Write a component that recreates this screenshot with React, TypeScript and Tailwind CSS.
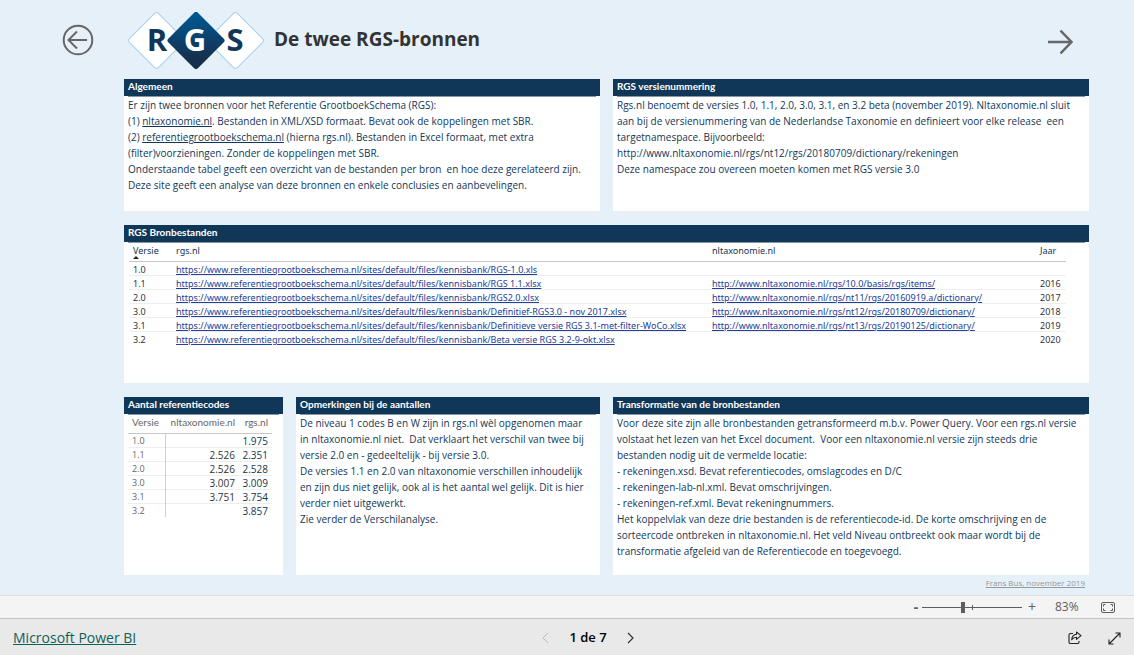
import React, { useState } from "react";

// ─── Data ──────────────────────────────────────────────────────────────────────

const BASE = "https://www.referentiegrootboekschema.nl/sites/default/files/kennisbank/";
const NT = "http://www.nltaxonomie.nl/rgs/";

interface Bron {
  versie: string;
  rgs: string;
  nt?: string;
  jaar?: string;
}

const bronnen: Bron[] = [
  { versie: "1.0", rgs: `${BASE}RGS-1.0.xls` },
  { versie: "1.1", rgs: `${BASE}RGS 1.1.xlsx`, nt: `${NT}10.0/basis/rgs/items/`, jaar: "2016" },
  { versie: "2.0", rgs: `${BASE}RGS2.0.xlsx`, nt: `${NT}nt11/rgs/20160919.a/dictionary/`, jaar: "2017" },
  { versie: "3.0", rgs: `${BASE}Definitief-RGS3.0 - nov 2017.xlsx`, nt: `${NT}nt12/rgs/20180709/dictionary/`, jaar: "2018" },
  { versie: "3.1", rgs: `${BASE}Definitieve versie RGS 3.1-met-filter-WoCo.xlsx`, nt: `${NT}nt13/rgs/20190125/dictionary/`, jaar: "2019" },
  { versie: "3.2", rgs: `${BASE}Beta versie RGS 3.2-9-okt.xlsx`, jaar: "2020" },
];

const aantallen: [string, string, string][] = [
  ["1.0", "", "1.975"],
  ["1.1", "2.526", "2.351"],
  ["2.0", "2.526", "2.528"],
  ["3.0", "3.007", "3.009"],
  ["3.1", "3.751", "3.754"],
  ["3.2", "", "3.857"],
];

const algemeen: React.ReactNode[] = [
  "Er zijn twee bronnen voor het Referentie GrootboekSchema (RGS):",
  <>(1) <a href="http://www.nltaxonomie.nl" className="underline">nltaxonomie.nl</a>. Bestanden in XML/XSD formaat. Bevat ook de koppelingen met SBR.</>,
  <>(2) <a href="https://www.referentiegrootboekschema.nl" className="underline">referentiegrootboekschema.nl</a> (hierna rgs.nl). Bestanden in Excel formaat, met extra</>,
  "(filter)voorzieningen. Zonder de koppelingen met SBR.",
  "Onderstaande tabel geeft een overzicht van de bestanden per bron  en hoe deze gerelateerd zijn.",
  "Deze site geeft een analyse van deze bronnen en enkele conclusies en aanbevelingen.",
];

const versienummering: React.ReactNode[] = [
  "Rgs.nl benoemt de versies 1.0, 1.1, 2.0, 3.0, 3.1, en 3.2 beta (november 2019). Nltaxonomie.nl sluit",
  "aan bij de versienummering van de Nederlandse Taxonomie en definieert voor elke release  een",
  "targetnamespace. Bijvoorbeeld:",
  "http://www.nltaxonomie.nl/rgs/nt12/rgs/20180709/dictionary/rekeningen",
  "Deze namespace zou overeen moeten komen met RGS versie 3.0",
];

const opmerkingen: React.ReactNode[] = [
  "De niveau 1 codes B en W zijn in rgs.nl wèl opgenomen maar",
  "in nltaxonomie.nl niet.  Dat verklaart het verschil van twee bij",
  "versie 2.0 en - gedeeltelijk - bij versie 3.0.",
  "De versies 1.1 en 2.0 van nltaxonomie verschillen inhoudelijk",
  "en zijn dus niet gelijk, ook al is het aantal wel gelijk. Dit is hier",
  "verder niet uitgewerkt.",
  "Zie verder de Verschilanalyse.",
];

const transformatie: React.ReactNode[] = [
  "Voor deze site zijn alle bronbestanden getransformeerd m.b.v. Power Query. Voor een rgs.nl versie",
  "volstaat het lezen van het Excel document.  Voor een nltaxonomie.nl versie zijn steeds drie",
  "bestanden nodig uit de vermelde locatie:",
  "- rekeningen.xsd. Bevat referentiecodes, omslagcodes en D/C",
  "- rekeningen-lab-nl.xml. Bevat omschrijvingen.",
  "- rekeningen-ref.xml. Bevat rekeningnummers.",
  "Het koppelvlak van deze drie bestanden is de referentiecode-id. De korte omschrijving en de",
  "sorteercode ontbreken in nltaxonomie.nl. Het veld Niveau ontbreekt ook maar wordt bij de",
  "transformatie afgeleid van de Referentiecode en toegevoegd.",
];

// ─── Building blocks ───────────────────────────────────────────────────────────

const Card: React.FC<{ title: string; className: string; children: React.ReactNode }> = ({ title, className, children }) => (
  <section className={`bg-white min-w-0 ${className}`}>
    <div className="bg-[#113758]">
      <h2 className="px-1 font-['Lato','Open_Sans',sans-serif] text-[10px] leading-[15px] pb-[2px] font-bold text-white whitespace-nowrap">{title}</h2>
    </div>
    <div className="mx-1 h-px bg-[#8397a9]" />
    {children}
  </section>
);

const Prose: React.FC<{ lines: React.ReactNode[] }> = ({ lines }) => (
  <p className="px-1 text-[10px] leading-4 whitespace-pre-wrap text-[#113758]">
    {lines.map((line, i) => (
      <span key={i} className="block">{line}</span>
    ))}
  </p>
);

const UrlLink: React.FC<{ href: string }> = ({ href }) => (
  <a href={href} className="text-[#21409a] underline">{href}</a>
);

const Logo: React.FC = () => (
  <svg width="138" height="58" viewBox="-1 0 138 58" role="img" aria-label="RGS" className="block">
    <defs>
      <linearGradient id="mid" x1="0" y1="0" x2="1" y2="1">
        <stop offset="0.1" stopColor="#00568f" />
        <stop offset="0.8" stopColor="#15304d" />
      </linearGradient>
    </defs>
    <rect x="-20.5" y="-20.5" width="41" height="41" rx="3" transform="translate(28.5 28.5) rotate(45)" fill="#fff" stroke="#a5d0ee" />
    <rect x="-20.5" y="-20.5" width="41" height="41" rx="3" transform="translate(107.5 28.5) rotate(45)" fill="#fff" stroke="#a5d0ee" />
    <rect x="-21" y="-21" width="42" height="42" rx="3" transform="translate(68 28.5) rotate(45)" fill="url(#mid)" />
    <g fontFamily="Open Sans, sans-serif" fontWeight="700" fontSize="31" textAnchor="middle">
      <text x="29" y="39" fill="#113758">R</text>
      <text x="67" y="39" fill="#fff">G</text>
      <text x="107" y="39" fill="#113758">S</text>
    </g>
  </svg>
);

// ─── Tables ────────────────────────────────────────────────────────────────────

const BronTable: React.FC = () => (
  <div className="pl-[5px] pr-[23px]">
    <table className="w-full table-fixed text-left font-['Noto_Sans','Open_Sans',sans-serif] text-[9px] leading-[11px] whitespace-nowrap text-[#333]">
      <colgroup>
        <col className="w-[43px]" />
        <col />
        <col className="w-[328px]" />
        <col className="w-[30px]" />
      </colgroup>
      <thead>
        <tr className="border-b border-[#c8c8c8] align-top text-[#113758]">
          <th className="h-[18px] pt-[2px] pl-1 font-normal">
            Versie
            <svg width="6" height="3" viewBox="0 0 6 3" className="block" aria-hidden="true">
              <path d="M0 3 3 0l3 3z" fill="#222" />
            </svg>
          </th>
          <th className="pt-[2px] pl-1 font-normal">rgs.nl</th>
          <th className="pt-[2px] pl-1 font-normal">nltaxonomie.nl</th>
          <th className="pt-[2px] pl-1 font-normal">Jaar</th>
        </tr>
      </thead>
      <tbody>
        {bronnen.map((b) => (
          <tr key={b.versie} className="h-[14px] border-b border-[#eee] last:border-0">
            <td className="pt-[2px] pl-1">{b.versie}</td>
            <td className="pt-[2px] pl-1"><UrlLink href={b.rgs} /></td>
            <td className="pt-[2px] pl-1">{b.nt && <UrlLink href={b.nt} />}</td>
            <td className="pt-[2px] pl-1">{b.jaar}</td>
          </tr>
        ))}
      </tbody>
    </table>
  </div>
);

const AantalTable: React.FC = () => (
  <div className="pl-1 pr-[11px]">
    <table className="w-full table-fixed text-[10px] leading-3 whitespace-nowrap text-[#666]">
      <colgroup>
        <col className="w-[37px]" />
        <col />
        <col className="w-[33px]" />
      </colgroup>
      <thead className="font-['Lato','Open_Sans',sans-serif]">
        <tr className="border-b border-[#c8c8c8] align-top">
          <th className="h-[18px] pt-px pl-1 text-left font-normal">Versie</th>
          <th className="pt-px pr-1 text-right font-normal">nltaxonomie.nl</th>
          <th className="pt-px pr-1 text-right font-normal">rgs.nl</th>
        </tr>
      </thead>
      <tbody>
        {aantallen.map(([versie, nt, rgs]) => (
          <tr key={versie} className="h-[14px] border-b border-[#eee] last:border-0">
            <td className="border-r border-[#d0d0d0] pt-px pl-1 text-[9px]">{versie}</td>
            <td className="pt-px pr-1 text-right text-[#333]">{nt}</td>
            <td className="pt-px pr-1 text-right text-[#113758]">{rgs}</td>
          </tr>
        ))}
      </tbody>
    </table>
  </div>
);

// ─── Bars ──────────────────────────────────────────────────────────────────────

const ZoomBar: React.FC = () => {
  const [zoom, setZoom] = useState(83);
  return (
    <div className="flex h-[23px] items-center justify-end border-t border-[#dcdcdc] bg-[#f4f4f4] pr-[19px] text-[#605e5c]">
      <button type="button" aria-label="Uitzoomen" className="w-3 text-sm leading-4 font-bold" onClick={() => setZoom(zoom - 10)}>-</button>
      <div className="relative flex h-4 w-[100px] items-center">
        <div className="absolute left-1/2 h-[5px] w-px bg-[#605e5c]" />
        <input
          type="range"
          aria-label="Zoom"
          min={10}
          max={190}
          value={zoom}
          onChange={(e) => setZoom(Number(e.target.value))}
          className="h-px w-full appearance-none bg-[#605e5c] [&::-webkit-slider-thumb]:h-[11px] [&::-webkit-slider-thumb]:w-1 [&::-webkit-slider-thumb]:appearance-none [&::-webkit-slider-thumb]:bg-[#605e5c]"
        />
      </div>
      <button type="button" aria-label="Inzoomen" className="w-5 text-sm leading-4" onClick={() => setZoom(zoom + 10)}>+</button>
      <span className="w-[46px] pl-[13px] text-xs">{zoom}%</span>
      <button type="button" aria-label="Aanpassen aan pagina" className="ml-[13px]">
        <svg width="14" height="11" viewBox="0 0 14 11" fill="none" stroke="#605e5c" className="block">
          <rect x="0.5" y="0.5" width="13" height="10" rx="1.5" />
          <path d="M4.5 2.5h-2v2M2.5 6.5v2h2M9.5 2.5h2v2M11.5 6.5v2h-2" />
        </svg>
      </button>
    </div>
  );
};

const Footer: React.FC = () => (
  <footer className="grid h-[37px] grid-cols-[1fr_auto_1fr] items-center border-t border-[#c3c3c3] bg-[#e9e9e9] pt-[2px] px-[13px]">
    <a href="https://powerbi.microsoft.com" className="justify-self-start text-sm text-[#0f6157] underline">Microsoft Power BI</a>
    <nav className="ml-[42px] flex items-center gap-5 text-[13px] font-semibold text-black">
      <button type="button" aria-label="Vorige pagina" disabled>
        <svg width="7" height="12" viewBox="0 0 7 12" fill="none" stroke="#bbb" className="block"><path d="M6 1 1 6l5 5" /></svg>
      </button>
      <span>1 de 7</span>
      <button type="button" aria-label="Volgende pagina">
        <svg width="7" height="12" viewBox="0 0 7 12" fill="none" stroke="#333" strokeWidth="1.2" className="block"><path d="m1 1 5 5-5 5" /></svg>
      </button>
    </nav>
    <div className="flex items-center gap-[26px] justify-self-end">
      <button type="button" aria-label="Delen">
        <svg width="14" height="14" viewBox="0 0 14 14" fill="none" stroke="#222" strokeWidth="1.1" strokeLinejoin="round" className="block">
          <path d="M5 2.5H2.5A1.5 1.5 0 0 0 1 4v7a1.5 1.5 0 0 0 1.5 1.5h7A1.5 1.5 0 0 0 11 11v-1" />
          <path d="M8.5 1 13 4.7 8.5 8.4V6.3C6.5 6.3 5 7 3.7 8.8 4 5.5 5.7 3.4 8.5 3.2z" />
        </svg>
      </button>
      <button type="button" aria-label="Volledig scherm">
        <svg width="13" height="13" viewBox="0 0 13 13" fill="none" stroke="#222" strokeWidth="1.1" className="block">
          <path d="M1 12 12 1M7.5 1H12v4.5M1 7.5V12h4.5" />
        </svg>
      </button>
    </div>
  </footer>
);

// ─── Page ──────────────────────────────────────────────────────────────────────

export default function App() {
  return (
    <div className="flex min-h-screen flex-col bg-[#e5f0f9] font-['Open_Sans','Noto_Sans',sans-serif]">
      <header className="flex h-[79px] items-center pl-[62px] pr-[61px]">
        <button type="button" aria-label="Terug">
          <svg width="32" height="32" viewBox="0 0 32 32" fill="none" stroke="#666" strokeWidth="2" className="block">
            <circle cx="16" cy="16" r="14.3" />
            <path d="M25 16H7M15 7.5 6.5 16l8.5 8.5" />
          </svg>
        </button>
        <div className="ml-[33px] pt-[2px]"><Logo /></div>
        <h1 className="ml-[9px] text-[19px] font-bold text-[#333]">De twee RGS-bronnen</h1>
        <button type="button" aria-label="Volgende" className="ml-auto pt-1">
          <svg width="25" height="26" viewBox="0 0 25 26" fill="none" stroke="#666" strokeWidth="2.4" className="block">
            <path d="M0 13h23M12.5 1.7 23.5 13 12.5 24.3" />
          </svg>
        </button>
      </header>

      <main className="grid flex-1 grid-cols-[159fr_304fr_476fr] gap-x-[13px] gap-y-[14px] pl-[124px] pr-[45px]">
        <Card title="Algemeen" className="col-span-2 min-h-[132px]">
          <Prose lines={algemeen} />
        </Card>
        <Card title="RGS versienummering" className="min-h-[132px]">
          <Prose lines={versienummering} />
        </Card>
        <Card title="RGS Bronbestanden" className="col-span-3 min-h-[158px]">
          <BronTable />
        </Card>
        <Card title="Aantal referentiecodes" className="min-h-[178px]">
          <AantalTable />
        </Card>
        <Card title="Opmerkingen bij de aantallen" className="min-h-[178px]">
          <Prose lines={opmerkingen} />
        </Card>
        <Card title="Transformatie van de bronbestanden" className="min-h-[178px]">
          <Prose lines={transformatie} />
        </Card>
      </main>

      <div className="flex h-5 justify-end pr-[49px]">
        <a href="#auteur" className="text-[8px] leading-4 text-[#999] underline">Frans Bus, november 2019</a>
      </div>

      <ZoomBar />
      <Footer />
    </div>
  );
}
